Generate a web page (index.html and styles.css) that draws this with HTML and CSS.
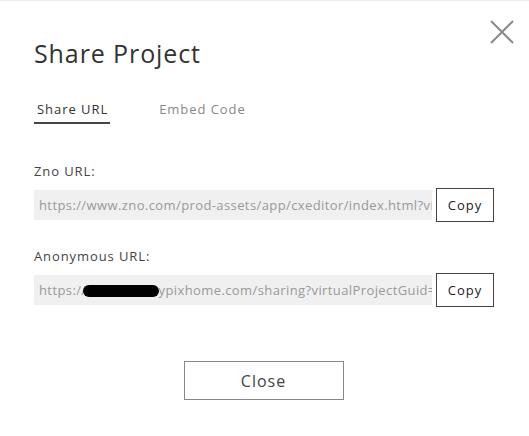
FILE: index.html
```html
<!DOCTYPE html>
<html lang="en">

    <head>
        <meta charset="UTF-8">
        <meta name="viewport" content="width=device-width, initial-scale=1.0">
        <title>Share Project</title>
        <link rel="stylesheet" href="styles.css">
    </head>

    <body>
        <div class="share">
            <a class="share-close" href="#" title="Close">
                <svg width="24" height="24" viewBox="0 0 24 24">
                    <path d="M1 1 L23 23 M23 1 L1 23" stroke="#8a8a8a" stroke-width="2" fill="none" />
                </svg>
            </a>
            <h1 class="share-title">Share Project</h1>

            <ul class="tabs">
                <li class="tab active">Share URL</li>
                <li class="tab">Embed Code</li>
            </ul>

            <div class="field">
                <label>Zno URL:</label>
                <div class="field-row">
                    <div class="field-input">https://www.zno.com/prod-assets/app/cxeditor/index.html?virtualProjectGuid=</div>
                    <button class="btn-copy">Copy</button>
                </div>
            </div>

            <div class="field">
                <label>Anonymous URL:</label>
                <div class="field-row">
                    <div class="field-input">https://<span class="redact"></span>ypixhome.com/sharing?virtualProjectGuid=</div>
                    <button class="btn-copy">Copy</button>
                </div>
            </div>

            <div class="share-foot">
                <button class="btn-close">Close</button>
            </div>
        </div>
    </body>

</html>
```
FILE: styles.css
```css
* {
    padding: 0;
    margin: 0;
    list-style: none;
    box-sizing: border-box;
}

body {
    font-family: "Open Sans", "Liberation Sans", sans-serif;
    color: #444;
    background: #fff;
    border-top: 1px solid #ececec;
}

.share {
    position: relative;
    padding: 0 34px;
}

.share-close {
    position: absolute;
    top: 19px;
    right: 15px;
    display: block;
    width: 24px;
    height: 24px;
}

.share-title {
    padding-top: 35px;
    font-size: 25px;
    font-weight: 400;
    line-height: 34px;
    letter-spacing: 0.9px;
    color: #333;
}

.tabs {
    display: flex;
    gap: 46px;
    margin-top: 30px;
}

.tab {
    padding: 0 3px 4px;
    font-size: 13px;
    line-height: 18px;
    letter-spacing: 0.95px;
    color: #888;
    border-bottom: 2px solid transparent;
}

.tab.active {
    padding-right: 2px;
    color: #333;
    border-bottom-color: #444;
}

.field {
    margin-top: 38px;
}

.field + .field {
    margin-top: 25px;
}

.field label {
    display: block;
    font-size: 13px;
    line-height: 18px;
    letter-spacing: 0.9px;
    color: #444;
}

.field-row {
    display: flex;
    align-items: center;
    gap: 4px;
    margin-top: 8px;
}

.field-input {
    width: 398px;
    height: 30px;
    padding: 0 5px;
    overflow: hidden;
    white-space: nowrap;
    font-size: 13px;
    line-height: 30px;
    letter-spacing: 0.4px;
    color: #999;
    background: #f0f0f0;
}

.redact {
    display: inline-block;
    width: 76px;
    height: 12px;
    margin: 0 0 0 -4px;
    vertical-align: -2px;
    border-radius: 6px;
    background: #000;
}

.btn-copy {
    width: 58px;
    height: 34px;
    font-family: inherit;
    font-size: 13px;
    letter-spacing: 1px;
    color: #222;
    background: #fff;
    border: 1px solid #444;
}

.share-foot {
    display: flex;
    justify-content: center;
    margin-top: 54px;
    padding-right: 2px;
}

.btn-close {
    width: 160px;
    height: 39px;
    font-family: inherit;
    font-size: 16px;
    letter-spacing: 1px;
    color: #444;
    background: #fff;
    border: 1px solid #888;
}
```
